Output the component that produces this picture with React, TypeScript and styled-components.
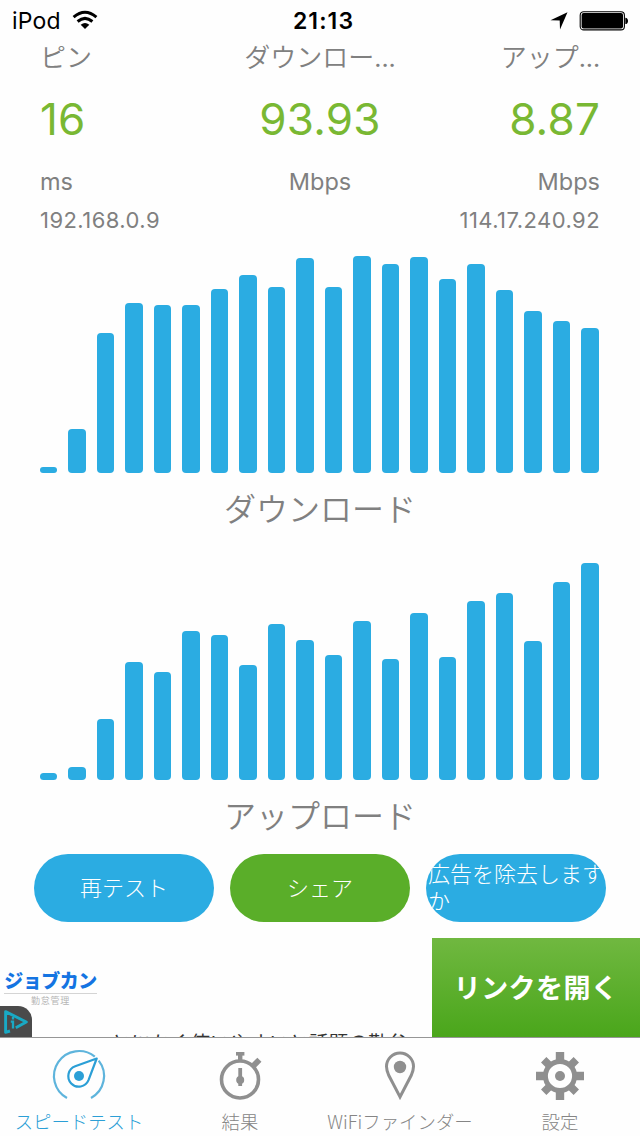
import React from "react";
import styled, { createGlobalStyle } from "styled-components";

const GlobalStyle = createGlobalStyle`
  * { box-sizing: border-box; }
  body {
    margin: 0;
    background: #fefefe;
    font-family: Inter, "Noto Sans CJK JP", sans-serif;
    -webkit-font-smoothing: antialiased;
  }
`;

const kana = `"Noto Sans CJK JP", sans-serif`;

const Screen = styled.div`
  width: 640px;
  height: 1136px;
  display: flex;
  flex-direction: column;
  overflow: hidden;
  background: #fefefe;
  color: #808080;
`;

const StatusBar = styled.header`
  height: 40px;
  flex: none;
  padding: 1px 11px 0 12px;
  display: grid;
  grid-template-columns: 1fr auto 1fr;
  align-items: center;
  color: #000;
  font-size: 23px;
  line-height: 40px;
`;

const Carrier = styled.div`
  display: flex;
  align-items: center;
  gap: 11px;
  letter-spacing: 0.2px;
  svg { margin-top: -2px; }
`;

const Clock = styled.div`
  font-weight: 600;
  letter-spacing: 1.1px;
  padding-left: 6px;
`;

const Indicators = styled.div`
  display: flex;
  align-items: center;
  justify-content: flex-end;
  gap: 11px;
`;

const Metrics = styled.section`
  flex: none;
  height: 164px;
  padding: 0 40px;
  display: grid;
  grid-template-columns: 1fr 1fr 1fr;
`;

const Metric = styled.div<{ $align: string }>`
  text-align: ${(p) => p.$align};
`;

const MetricName = styled.div`
  height: 34px;
  font: 350 26px/31px ${kana};
  white-space: nowrap;
`;

const Ellipsis = styled.span`
  font: 400 25px/20px Inter, sans-serif;
  letter-spacing: -0.1px;
`;

const MetricValue = styled.div`
  height: 90px;
  font-size: 44px;
  line-height: 90px;
  color: #79b833;
  letter-spacing: 0.2px;
`;

const MetricUnit = styled.div`
  height: 36px;
  font-size: 23.5px;
  line-height: 36px;
`;

const Addresses = styled.div`
  flex: none;
  height: 34px;
  padding: 0 40px;
  display: flex;
  justify-content: space-between;
  font-size: 22px;
  line-height: 33px;
  letter-spacing: 0.45px;
`;

const Chart = styled.figure`
  flex: none;
  margin: 0;
  padding: 0 40px;
  height: 307px;
  display: flex;
  flex-direction: column;
`;

const Bars = styled.div`
  height: 235px;
  display: flex;
  align-items: flex-end;
  gap: 11px;
`;

const Bar = styled.div`
  width: 17px;
  flex: none;
  border-radius: 4px;
  background: #2bace2;
  &:nth-child(even) { width: 18px; }
`;

const ChartTitle = styled.figcaption`
  height: 72px;
  text-align: center;
  font: 350 32px/68px ${kana};
`;

const Actions = styled.div`
  flex: none;
  height: 86px;
  padding: 2px 34px 16px;
  display: flex;
  gap: 16px;
`;

const ActionButton = styled.button<{ $color: string; $wrap?: boolean }>`
  width: 180px;
  height: 68px;
  padding: ${(p) => (p.$wrap ? "0 0 4px 2px" : "0 0 3px")};
  border: 0;
  border-radius: 34px;
  overflow: hidden;
  background: ${(p) => p.$color};
  color: #fff;
  text-align: ${(p) => (p.$wrap ? "left" : "center")};
  white-space: ${(p) => (p.$wrap ? "pre" : "nowrap")};
  font: 300 22px/27px ${kana};
`;

const AdBanner = styled.aside`
  position: relative;
  flex: none;
  height: 99px;
  display: flex;
  overflow: hidden;
`;

const Brand = styled.div`
  flex: none;
  width: 97px;
  padding: 29px 0 0 4px;
  text-align: center;
`;

const BrandName = styled.div`
  font: 900 19px/26px ${kana};
  color: #1474e2;
  white-space: nowrap;
  letter-spacing: -0.5px;
  border-bottom: 1px solid #d4d4d4;
`;

const BrandSub = styled.div`
  font: 400 9px/13px ${kana};
  letter-spacing: 0.8px;
  color: #b5b5b5;
`;

const AdCopy = styled.div`
  flex: 1;
  min-width: 0;
  padding: 88px 0 0 14px;
  font: 400 19.8px/32px ${kana};
  color: #333;
  white-space: nowrap;
`;

const AdLink = styled.a`
  flex: none;
  width: 208px;
  height: 99px;
  text-align: center;
  font: 700 27px/97px ${kana};
  letter-spacing: 0.4px;
  color: #fff;
  background: linear-gradient(#70b840, #4aa61b);
`;

const AdChoices = styled.div`
  position: absolute;
  left: 0;
  bottom: 0;
  width: 32px;
  height: 31px;
  border-top-right-radius: 14px;
  background: #4a4a4a;
  svg { display: block; }
`;

const TabBar = styled.nav`
  flex: none;
  height: 99px;
  border-top: 1px solid #969696;
  display: grid;
  grid-template-columns: repeat(4, 160px);
`;

const Tab = styled.div<{ $active?: boolean }>`
  display: flex;
  flex-direction: column;
  align-items: center;
  padding: 10px ${(p) => (p.$active ? "2px" : "0")} 0 0;
  color: ${(p) => (p.$active ? "#2b9fd6" : "#858585")};
  font: 300 18.4px/34px ${kana};
  white-space: nowrap;
  svg { display: block; flex: none; overflow: visible; }
`;

const download = [6.5, 44, 140, 170, 168, 168, 184, 198.5, 186.5, 215, 186.5, 217, 209, 216, 194, 209, 183, 162, 152, 145];
const upload = [7.5, 13, 61, 118, 108, 149, 145, 115, 156, 140, 125, 159, 121.5, 167, 123.5, 179, 187.5, 139, 198.5, 217];

const metrics = [
  { name: "ピン", value: "16", unit: "ms", align: "left" },
  { name: "ダウンロー", cut: true, value: "93.93", unit: "Mbps", align: "center" },
  { name: "アップ", cut: true, value: "8.87", unit: "Mbps", align: "right" },
];

function BarChart({ title, data }: { title: string; data: number[] }) {
  return (
    <Chart>
      <Bars>
        {data.map((h, i) => (
          <Bar key={i} style={{ height: h }} />
        ))}
      </Bars>
      <ChartTitle>{title}</ChartTitle>
    </Chart>
  );
}

const WifiIcon = () => (
  <svg width="26" height="20" viewBox="0 0 26 20" fill="none" stroke="#000" strokeWidth="3">
    <path d="M1.6 7.2 Q13 -2.7 24.4 7.2" />
    <path d="M5.6 11.5 Q13 5.2 20.4 11.5" />
    <path d="M13 19 L8.7 14.7 Q13 11.3 17.3 14.7Z" fill="#000" stroke="none" />
  </svg>
);

const LocationIcon = () => (
  <svg width="18" height="18" viewBox="0 0 18 18">
    <path d="M17.5 0.3 L10 17.5 L9.7 8.6 L0.5 8.2Z" fill="#000" />
  </svg>
);

const BatteryIcon = () => (
  <svg width="50" height="20" viewBox="0 0 50 20">
    <rect x="1.2" y="0.7" width="44.2" height="18.2" rx="3.5" fill="none" stroke="#000" strokeWidth="1.1" />
    <rect x="2.6" y="2.1" width="41.4" height="15.4" rx="2" fill="#000" />
    <path d="M46.3 6.7 Q49 7 49 9.9 Q49 12.8 46.3 13.1Z" fill="#000" />
  </svg>
);

const SpeedIcon = () => (
  <svg width="52" height="56" viewBox="0 0 52 56" fill="none">
    <path d="M14 50 A25 25 0 1 1 41.8 8.7 M45.7 12.6 A25 25 0 0 1 38 50" stroke="#5eb4dc" strokeWidth="2.2" />
    <path d="M43.7 10.5 L22.2 18.3 A10.5 10.5 0 1 0 35.5 32.2 Z" stroke="#2b9fd6" strokeWidth="2.2" strokeLinejoin="round" />
    <circle cx="26" cy="28" r="5" fill="#2b9fd6" />
  </svg>
);

const StopwatchIcon = () => (
  <svg width="54" height="56" viewBox="0 0 54 56" fill="none" stroke="#8f8f8f">
    <circle cx="27" cy="31.5" r="18.5" strokeWidth="3.6" />
    <path d="M23 5.8H31.4" strokeWidth="3.6" />
    <path d="M27.2 6V13" strokeWidth="4.4" />
    <path d="M39.6 18.6L46.4 11.8" strokeWidth="5.8" />
    <path d="M27.2 20V38" strokeWidth="3.8" />
    <circle cx="27.2" cy="32" r="4" fill="#8f8f8f" stroke="none" />
  </svg>
);

const PinIcon = () => (
  <svg width="54" height="56" viewBox="0 0 54 56" fill="none">
    <path d="M27 48.9 L15.6 27 C14.2 23.6 13.5 21.2 13.5 18.5 A13.5 13.5 0 0 1 40.5 18.5 C40.5 21.2 39.8 23.6 38.4 27 Z" stroke="#8f8f8f" strokeWidth="3" />
    <circle cx="27" cy="19" r="6.2" fill="#8f8f8f" />
  </svg>
);

const GearIcon = () => (
  <svg width="54" height="56" viewBox="0 0 54 56">
    <g stroke="#8f8f8f" strokeWidth="8.4">
      <path d="M27 4V14 M27 42V52 M3 28H13 M41 28H51" />
      <path d="M10.7 11.7L17 18 M37 38L43.3 44.3 M43.3 11.7L37 18 M17 38L10.7 44.3" strokeWidth="7.6" />
    </g>
    <circle cx="27" cy="28" r="14.6" fill="none" stroke="#8f8f8f" strokeWidth="5" />
    <circle cx="27" cy="28" r="5" fill="#8f8f8f" />
  </svg>
);

export default function App() {
  return (
    <Screen>
      <GlobalStyle />
      <StatusBar>
        <Carrier>
          iPod <WifiIcon />
        </Carrier>
        <Clock>21:13</Clock>
        <Indicators>
          <LocationIcon />
          <BatteryIcon />
        </Indicators>
      </StatusBar>
      <Metrics>
        {metrics.map((m) => (
          <Metric key={m.name} $align={m.align}>
            <MetricName>
              {m.name}
              {m.cut && <Ellipsis>...</Ellipsis>}
            </MetricName>
            <MetricValue>{m.value}</MetricValue>
            <MetricUnit>{m.unit}</MetricUnit>
          </Metric>
        ))}
      </Metrics>
      <Addresses>
        <span>192.168.0.9</span>
        <span>114.17.240.92</span>
      </Addresses>
      <BarChart title="ダウンロード" data={download} />
      <BarChart title="アップロード" data={upload} />
      <Actions>
        <ActionButton $color="#2bace2">再テスト</ActionButton>
        <ActionButton $color="#5aae29">シェア</ActionButton>
        <ActionButton $color="#2bace2" $wrap>{"広告を除去します\nか"}</ActionButton>
      </Actions>
      <AdBanner>
        <Brand>
          <BrandName>ジョブカン</BrandName>
          <BrandSub>勤怠管理</BrandSub>
        </Brand>
        <AdCopy>とにかく使いやすいと話題の勤怠</AdCopy>
        <AdLink>リンクを開く</AdLink>
        <AdChoices>
          <svg width="32" height="31" viewBox="0 0 32 31" fill="none" stroke="#19a9c4">
            <path d="M10 25L5.6 26.3V5.6L26.3 16L15.8 21.8" strokeWidth="2.9" strokeLinejoin="round" />
            <path d="M13 11V13.4 M10.8 15.6H13V22.5" strokeWidth="2.3" />
          </svg>
        </AdChoices>
      </AdBanner>
      <TabBar>
        <Tab $active>
          <SpeedIcon />
          スピードテスト
        </Tab>
        <Tab>
          <StopwatchIcon />
          結果
        </Tab>
        <Tab>
          <PinIcon />
          WiFiファインダー
        </Tab>
        <Tab>
          <GearIcon />
          設定
        </Tab>
      </TabBar>
    </Screen>
  );
}
